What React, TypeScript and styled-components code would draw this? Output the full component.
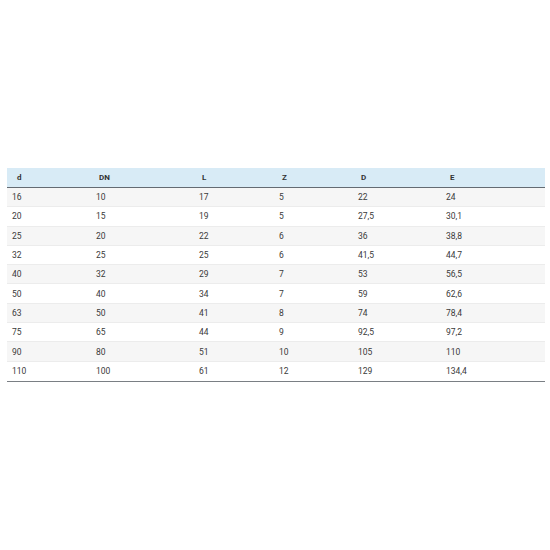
import React from "react";
import styled, { createGlobalStyle } from "styled-components";

const Global = createGlobalStyle`
  html, body { margin: 0; padding: 0; background: #fff; }
  body { font-family: Roboto, "Liberation Sans", sans-serif; }
`;

const Page = styled.div`
  width: 550px;
  height: 550px;
  padding: 168px 5px 0 7px;
  box-sizing: border-box;
`;

const Table = styled.div`
  display: grid;
  grid-template-columns: 84px 103px 80px 79px 88px 104px;
  border-bottom: 1.5px solid #7a7f84;
`;

const HeadCell = styled.div<{ $pad: number }>`
  background: #d8ebf6;
  height: 20px;
  box-sizing: border-box;
  border-bottom: 1.5px solid #646b72;
  display: flex;
  align-items: center;
  padding-left: ${(p) => p.$pad}px;
  font-size: 8px;
  font-weight: 700;
  color: #333;
`;

const Cell = styled.div<{ $odd: boolean; $last: boolean }>`
  background: ${(p) => (p.$odd ? "#f6f6f6" : "#fff")};
  height: 19.3px;
  box-sizing: border-box;
  border-bottom: ${(p) => (p.$last ? "none" : "1px solid #ececec")};
  display: flex;
  align-items: center;
  padding-left: 5px;
  font-size: 8.5px;
  color: #3a3a3a;
`;

const headers = ["d", "DN", "L", "Z", "D", "E"];
const headPad = [10, 8, 8, 8, 8, 9];
const rows = [
  ["16", "10", "17", "5", "22", "24"],
  ["20", "15", "19", "5", "27,5", "30,1"],
  ["25", "20", "22", "6", "36", "38,8"],
  ["32", "25", "25", "6", "41,5", "44,7"],
  ["40", "32", "29", "7", "53", "56,5"],
  ["50", "40", "34", "7", "59", "62,6"],
  ["63", "50", "41", "8", "74", "78,4"],
  ["75", "65", "44", "9", "92,5", "97,2"],
  ["90", "80", "51", "10", "105", "110"],
  ["110", "100", "61", "12", "129", "134,4"],
];

export default function App() {
  return (
    <>
      <Global />
      <Page>
        <Table>
          {headers.map((h, i) => (
            <HeadCell key={h + i} $pad={headPad[i]}>
              {h}
            </HeadCell>
          ))}
          {rows.map((r, ri) =>
            r.map((c, ci) => (
              <Cell key={ri + "-" + ci} $odd={ri % 2 === 0} $last={ri === rows.length - 1}>
                {c}
              </Cell>
            ))
          )}
        </Table>
      </Page>
    </>
  );
}
